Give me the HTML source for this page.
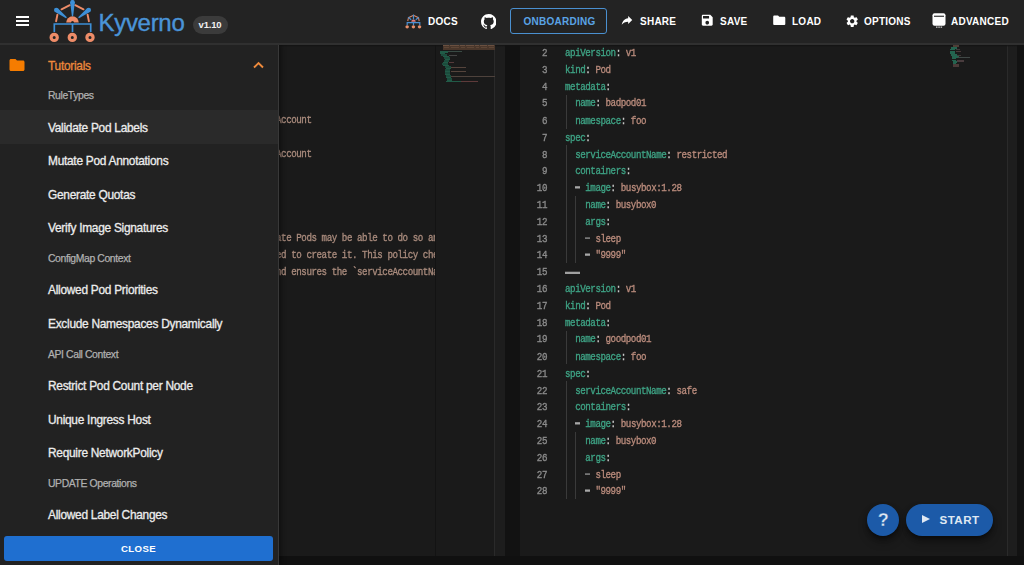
<!DOCTYPE html>
<html><head><meta charset="utf-8">
<style>
*{box-sizing:border-box;margin:0;padding:0}
html,body{width:1024px;height:565px;overflow:hidden;background:#101010;font-family:"Liberation Sans",sans-serif}
.abs{position:absolute}
#hdr{left:0;top:0;width:1024px;height:45px;background:#232323;border-bottom:2px solid #303030}
.nav{color:#fff;font-weight:700;font-size:10px;letter-spacing:0.25px;white-space:nowrap}
#ed1{left:0;top:44px;width:505px;height:512px;background:#1a1a1a}
#ed2{left:520px;top:44px;width:497px;height:512px;background:#1a1a1a}
.mono{font-family:"Liberation Mono",monospace;font-size:9.2px;letter-spacing:-0.45px;white-space:pre;font-weight:400;-webkit-text-stroke:0.3px currentColor;transform:scaleY(1.14);transform-origin:0 0}
.ln{color:#8c8c8c;text-align:right;width:20px}
.k{color:#3ea284}
.s{color:#b98b7c}
.p{color:#c8c8c8}
#drawer{left:0;top:45px;width:279px;height:520px;background:#222222;border-right:1px solid #383838;box-shadow:2px 0 5px rgba(0,0,0,0.45);clip-path:inset(0px -12px 0px 0px)}
.it{left:48px;color:#ececec;font-size:11.9px;letter-spacing:-0.27px;white-space:nowrap;-webkit-text-stroke:0.3px currentColor}
.sub{left:48px;color:#b0b0b0;font-size:10.4px;letter-spacing:-0.38px;white-space:nowrap;-webkit-text-stroke:0.25px currentColor}
</style></head><body>
<!-- editors -->
<div id="ed1" class="abs"></div>
<div class="abs" style="left:435px;top:44px;width:1px;height:512px;background:#131313"></div>
<div class="abs" style="left:494px;top:44px;width:1px;height:512px;background:#2a2a2a"></div>
<div class="abs" style="left:495px;top:44px;width:10px;height:512px;background:#1d1d1d"></div>
<div class="abs" style="left:505px;top:44px;width:15px;height:512px;background:#121212"></div>
<div id="ed2" class="abs"></div>
<div class="abs" style="left:1007px;top:44px;width:1px;height:512px;background:#2a2a2a"></div>
<div class="abs" style="left:1008px;top:44px;width:9px;height:512px;background:#1d1d1d"></div>
<div class="abs" style="left:1017px;top:44px;width:7px;height:512px;background:#121212"></div>

<div class="abs" style="left:279px;top:45px;width:745px;height:2px;background:linear-gradient(#121212,rgba(26,26,26,0))"></div>
<!-- left editor visible text -->
<div class="abs" style="left:278px;top:44px;width:157px;height:512px;overflow:hidden"><div class="abs mono s" style="left:-2px;top:69.4px;line-height:14.781px;color:#a88a7c">Account

Account




ate Pods may be able to do so and
ed to create it. This policy checks
nd ensures the `serviceAccountName`</div></div>

<!-- left minimap -->
<div class="abs" style="left:0;top:0;width:520px;height:90px;filter:blur(0.3px)">
<div class="abs" style="left:442.6px;top:45px;width:52.2px;height:5px;background:#4a372b"></div>
<div class="abs" style="left:443px;top:45px;width:6px;height:1.2px;background:#6a5040"></div>
<div class="abs" style="left:444px;top:47.2px;width:5px;height:1.1px;background:#5e4636"></div>
<div class="abs" style="left:450px;top:45px;width:9px;height:1.2px;background:#6a5040"></div>
<div class="abs" style="left:451px;top:47.2px;width:8px;height:1.1px;background:#5e4636"></div>
<div class="abs" style="left:460px;top:45px;width:5px;height:1.2px;background:#6a5040"></div>
<div class="abs" style="left:461px;top:47.2px;width:4px;height:1.1px;background:#5e4636"></div>
<div class="abs" style="left:466px;top:45px;width:8px;height:1.2px;background:#6a5040"></div>
<div class="abs" style="left:467px;top:47.2px;width:7px;height:1.1px;background:#5e4636"></div>
<div class="abs" style="left:475px;top:45px;width:4px;height:1.2px;background:#6a5040"></div>
<div class="abs" style="left:476px;top:47.2px;width:3px;height:1.1px;background:#5e4636"></div>
<div class="abs" style="left:480px;top:45px;width:7px;height:1.2px;background:#6a5040"></div>
<div class="abs" style="left:481px;top:47.2px;width:6px;height:1.1px;background:#5e4636"></div>
<div class="abs" style="left:488px;top:45px;width:6px;height:1.2px;background:#6a5040"></div>
<div class="abs" style="left:489px;top:47.2px;width:5px;height:1.1px;background:#5e4636"></div>
<div class="abs" style="left:439.5px;top:51px;width:8px;height:1.5px;background:#215a47"></div>
<div class="abs" style="left:447.5px;top:51.2px;width:14px;height:1.2px;background:#394a44"></div>
<div class="abs" style="left:440px;top:52.5px;width:5px;height:1.5px;background:#215a47"></div>
<div class="abs" style="left:441px;top:54px;width:6px;height:1.5px;background:#1c4c3d"></div>
<div class="abs" style="left:442.5px;top:55.5px;width:6px;height:1.5px;background:#215a47"></div>
<div class="abs" style="left:444px;top:57px;width:6px;height:1.5px;background:#1c4c3d"></div>
<div class="abs" style="left:445px;top:58.5px;width:5px;height:1.5px;background:#215a47"></div>
<div class="abs" style="left:443.5px;top:60px;width:5px;height:1.5px;background:#1c4c3d"></div>
<div class="abs" style="left:442.5px;top:61.5px;width:5px;height:1.5px;background:#215a47"></div>
<div class="abs" style="left:442px;top:63px;width:6px;height:1.5px;background:#1c4c3d"></div>
<div class="abs" style="left:443px;top:64.5px;width:6px;height:1.5px;background:#215a47"></div>
<div class="abs" style="left:445px;top:66px;width:6px;height:1.5px;background:#1c4c3d"></div>
<div class="abs" style="left:446px;top:67.5px;width:5px;height:1.5px;background:#215a47"></div>
<div class="abs" style="left:445px;top:69px;width:5px;height:1.5px;background:#1c4c3d"></div>
<div class="abs" style="left:444.5px;top:70.5px;width:5px;height:1.5px;background:#215a47"></div>
<div class="abs" style="left:444.5px;top:72px;width:5px;height:1.5px;background:#1c4c3d"></div>
<div class="abs" style="left:445px;top:73.5px;width:5px;height:1.5px;background:#215a47"></div>
<div class="abs" style="left:445.5px;top:75px;width:5px;height:1.5px;background:#1c4c3d"></div>
<div class="abs" style="left:446px;top:76.5px;width:5px;height:1.5px;background:#215a47"></div>
<div class="abs" style="left:446.5px;top:78px;width:5px;height:1.5px;background:#1c4c3d"></div>
<div class="abs" style="left:446.5px;top:79.5px;width:5px;height:1.5px;background:#215a47"></div>
<div class="abs" style="left:449px;top:55.2px;width:8px;height:1px;background:#444444"></div>
<div class="abs" style="left:449px;top:62px;width:5px;height:1px;background:#553a3a"></div>
<div class="abs" style="left:451px;top:67px;width:15px;height:1.1px;background:#55443c"></div>
<div class="abs" style="left:451px;top:71.4px;width:15px;height:1.1px;background:#55443c"></div>
<div class="abs" style="left:451px;top:76.3px;width:44px;height:1.1px;background:#4e423c"></div>
<div class="abs" style="left:446px;top:80.8px;width:15px;height:1.3px;background:#215a47"></div>
<div class="abs" style="left:461px;top:80.8px;width:17px;height:1.3px;background:#5e3a3a"></div>
</div>
<!-- right minimap -->
<div class="abs" style="left:0;top:0;width:1024px;height:80px;filter:blur(0.35px)">
<div class="abs" style="left:952.8px;top:44.4px;width:6.6px;height:2.6px;background:#4e3e36"></div>
<div class="abs" style="left:950.5px;top:47px;width:6px;height:1.6px;background:#24634f"></div>
<div class="abs" style="left:949.8px;top:48.8px;width:5px;height:1.6px;background:#24634f"></div>
<div class="abs" style="left:956px;top:49px;width:4px;height:1.2px;background:#3e3a3a"></div>
<div class="abs" style="left:950px;top:50.6px;width:4.6px;height:1.6px;background:#24634f"></div>
<div class="abs" style="left:955.5px;top:51.2px;width:5px;height:1.2px;background:#4a3a3a"></div>
<div class="abs" style="left:950.2px;top:52.4px;width:5px;height:1.6px;background:#24634f"></div>
<div class="abs" style="left:950.8px;top:54.2px;width:6.5px;height:1.6px;background:#24634f"></div>
<div class="abs" style="left:957px;top:54.6px;width:4px;height:1px;background:#403838"></div>
<div class="abs" style="left:951.5px;top:56px;width:7px;height:1.6px;background:#24634f"></div>
<div class="abs" style="left:958px;top:57px;width:12px;height:1.1px;background:#404846"></div>
<div class="abs" style="left:952px;top:57.8px;width:4px;height:1.6px;background:#24634f"></div>
<div class="abs" style="left:952.3px;top:59.6px;width:4px;height:1.6px;background:#24634f"></div>
<div class="abs" style="left:957px;top:59.8px;width:7px;height:2px;background:#4a3c3e"></div>
<div class="abs" style="left:952.5px;top:61.4px;width:4px;height:1.6px;background:#24634f"></div>
<div class="abs" style="left:952.8px;top:63.2px;width:3.5px;height:1.4px;background:#24634f"></div>
<div class="abs" style="left:953px;top:64.4px;width:6px;height:2.6px;background:#4a3a38"></div>
</div>
<!-- right editor -->
<div class="abs" style="left:565.5px;top:94.85px;width:1px;height:33.70px;background:#3a3a3a"></div>
<div class="abs" style="left:565.5px;top:145.40px;width:1px;height:117.95px;background:#3a3a3a"></div>
<div class="abs" style="left:565.5px;top:330.75px;width:1px;height:33.70px;background:#3a3a3a"></div>
<div class="abs" style="left:565.5px;top:381.30px;width:1px;height:117.95px;background:#3a3a3a"></div>
<div class="abs" style="left:575.2px;top:195.95px;width:1px;height:67.40px;background:#3a3a3a"></div>
<div class="abs" style="left:575.2px;top:431.85px;width:1px;height:67.40px;background:#3a3a3a"></div>
<div class="abs mono ln" style="left:527px;top:46px;line-height:14.781px">2
3
4
5
6
7
8
9
10
11
12
13
14
15
16
17
18
19
20
21
22
23
24
25
26
27
28</div>
<div class="abs mono" style="left:565px;top:46px;line-height:14.781px"><span class="k">apiVersion</span><span class="p">: </span><span class="s">v1</span>
<span class="k">kind</span><span class="p">: </span><span class="s">Pod</span>
<span class="k">metadata</span><span class="p">:</span>
<span class="p">  </span><span class="k">name</span><span class="p">: </span><span class="s">badpod01</span>
<span class="p">  </span><span class="k">namespace</span><span class="p">: </span><span class="s">foo</span>
<span class="k">spec</span><span class="p">:</span>
<span class="p">  </span><span class="k">serviceAccountName</span><span class="p">: </span><span class="s">restricted</span>
<span class="p">  </span><span class="k">containers</span><span class="p">:</span>
<span class="p">  </span><span style="display:inline-block;width:5.07px;height:1.45px;background:#a8a8a8;vertical-align:2.6px"></span><span class="p"> </span><span class="k">image</span><span class="p">: </span><span class="s">busybox:1.28</span>
<span class="p">    </span><span class="k">name</span><span class="p">: </span><span class="s">busybox0</span>
<span class="p">    </span><span class="k">args</span><span class="p">:</span>
<span class="p">    </span><span style="display:inline-block;width:5.07px;height:1.45px;background:#a8a8a8;vertical-align:2.6px"></span><span class="p"> </span><span class="s">sleep</span>
<span class="p">    </span><span style="display:inline-block;width:5.07px;height:1.45px;background:#a8a8a8;vertical-align:2.6px"></span><span class="p"> </span><span class="s">&quot;9999&quot;</span>
<span style="display:inline-block;width:15px;height:2px;background:#a0a0a0;vertical-align:1.1px"></span>
<span class="k">apiVersion</span><span class="p">: </span><span class="s">v1</span>
<span class="k">kind</span><span class="p">: </span><span class="s">Pod</span>
<span class="k">metadata</span><span class="p">:</span>
<span class="p">  </span><span class="k">name</span><span class="p">: </span><span class="s">goodpod01</span>
<span class="p">  </span><span class="k">namespace</span><span class="p">: </span><span class="s">foo</span>
<span class="k">spec</span><span class="p">:</span>
<span class="p">  </span><span class="k">serviceAccountName</span><span class="p">: </span><span class="s">safe</span>
<span class="p">  </span><span class="k">containers</span><span class="p">:</span>
<span class="p">  </span><span style="display:inline-block;width:5.07px;height:1.45px;background:#a8a8a8;vertical-align:2.6px"></span><span class="p"> </span><span class="k">image</span><span class="p">: </span><span class="s">busybox:1.28</span>
<span class="p">    </span><span class="k">name</span><span class="p">: </span><span class="s">busybox0</span>
<span class="p">    </span><span class="k">args</span><span class="p">:</span>
<span class="p">    </span><span style="display:inline-block;width:5.07px;height:1.45px;background:#a8a8a8;vertical-align:2.6px"></span><span class="p"> </span><span class="s">sleep</span>
<span class="p">    </span><span style="display:inline-block;width:5.07px;height:1.45px;background:#a8a8a8;vertical-align:2.6px"></span><span class="p"> </span><span class="s">&quot;9999&quot;</span></div>

<!-- header -->
<div id="hdr" class="abs"></div>
<div class="abs" style="left:15.5px;top:16.3px;width:13.5px;height:2.2px;background:#fff"></div>
<div class="abs" style="left:15.5px;top:19.9px;width:13.5px;height:2.2px;background:#fff"></div>
<div class="abs" style="left:15.5px;top:23.5px;width:13.5px;height:2.2px;background:#fff"></div>
<svg class="abs" style="left:48px;top:0" width="52" height="44" viewBox="48 0 52 44">
<g stroke="#ee8c68" stroke-width="1.9" stroke-linecap="round" fill="none">
<line x1="61.5" y1="9.3" x2="69.8" y2="5.2"/><line x1="75.2" y1="5.2" x2="83.5" y2="9.3"/>
<line x1="57.4" y1="14.8" x2="56.1" y2="21.3"/><line x1="87.6" y1="14.8" x2="88.9" y2="21.3"/>
</g>
<path d="M66.2 22.6 A6.3 6.3 0 0 1 78.8 22.6 Z" fill="#ee8c68"/>
<circle cx="72.5" cy="22.6" r="1.5" fill="#232323"/>
<g fill="#3d8fd6">
<circle cx="72.5" cy="2.2" r="2.3"/><path d="M70.2 2.5 L74.8 2.5 L73.1 16.3 L71.9 16.3 Z"/>
<circle cx="56.3" cy="10" r="2.3"/><path d="M54.8 11.7 L57.9 8.3 L66.9 17.3 L66 18.2 Z"/>
<circle cx="88.7" cy="10" r="2.3"/><path d="M90.2 11.7 L87.1 8.3 L78.1 17.3 L79 18.2 Z"/>
</g>
<g stroke="#3d8fd6" stroke-width="1.7" fill="none">
<polyline points="54.3,32 54.3,24 90.7,24 90.7,32"/><line x1="72.5" y1="24" x2="72.5" y2="32"/>
</g>
<g stroke="#ee8c68" stroke-width="3.2" fill="none">
<circle cx="54.2" cy="37.4" r="3.1"/><circle cx="72.3" cy="37.4" r="3.1"/><circle cx="90" cy="37.4" r="3.1"/>
</g>
</svg>
<div class="abs" style="left:98.5px;top:9.3px;font-size:24px;color:#4a94d8;letter-spacing:-0.3px;white-space:nowrap;-webkit-text-stroke:0.4px #4a94d8">Kyverno</div>
<div class="abs" style="left:192.5px;top:16px;width:35px;height:18px;border-radius:9px;background:#3b3b3b;color:#f0f0f0;font-size:9.5px;font-weight:700;text-align:center;line-height:18px;letter-spacing:-0.2px">v1.10</div>
<svg class="abs" style="left:404.5px;top:13px" width="18" height="17" viewBox="48 0 52 44">
<g stroke="#e08a6a" stroke-width="3" fill="none"><path d="M56 21 L58 11 L72.5 4 L87 11 L89 21"/></g>
<g stroke="#4a8fd0" stroke-width="3.5" fill="none"><line x1="72.5" y1="2" x2="72.5" y2="16"/><line x1="57" y1="10" x2="66" y2="17"/><line x1="88" y1="10" x2="79" y2="17"/><polyline points="54.3,33 54.3,25 90.7,25 90.7,33"/><line x1="72.5" y1="25" x2="72.5" y2="33"/></g>
<path d="M66 23 A6.5 6.5 0 0 1 79 23 Z" fill="#e07a7a"/>
<g fill="#e8906c"><circle cx="54.2" cy="37.5" r="5"/><circle cx="72.3" cy="37.5" r="5"/><circle cx="90" cy="37.5" r="5"/></g>
</svg>
<div class="abs nav" style="left:428px;top:16px">DOCS</div>
<svg class="abs" style="left:480.5px;top:13.8px" width="15.5" height="15.5" viewBox="0 0 16 16"><path fill="#fff" d="M8 0C3.58 0 0 3.58 0 8c0 3.54 2.29 6.53 5.47 7.59.4.07.55-.17.55-.38 0-.19-.01-.82-.01-1.49-2.01.37-2.53-.49-2.69-.94-.09-.23-.48-.94-.82-1.13-.28-.15-.68-.52-.01-.53.63-.01 1.08.58 1.23.82.72 1.21 1.87.87 2.33.66.07-.52.28-.87.51-1.07-1.78-.2-3.64-.89-3.64-3.95 0-.87.31-1.59.82-2.15-.08-.2-.36-1.02.08-2.12 0 0 .67-.21 2.2.82.64-.18 1.32-.27 2-.27.68 0 1.36.09 2 .27 1.53-1.04 2.2-.82 2.2-.82.44 1.1.16 1.92.08 2.12.51.56.82 1.27.82 2.15 0 3.07-1.87 3.75-3.65 3.95.29.25.54.73.54 1.48 0 1.07-.01 1.93-.01 2.2 0 .21.15.46.55.38A8.013 8.013 0 0016 8c0-4.42-3.58-8-8-8z"/></svg>
<div class="abs" style="left:510px;top:8px;width:97px;height:26px;border:1.5px solid #4a90d0;border-radius:3px"></div>
<div class="abs nav" style="left:523.5px;top:16px;color:#5aa3e6">ONBOARDING</div>
<svg class="abs" style="left:620px;top:13px" width="14" height="14" viewBox="0 0 24 24"><path fill="#fff" d="M14 9V5l7 7-7 7v-4.1c-5 0-8.5 1.6-11 5.1 1-5 4-10 11-11z"/></svg>
<div class="abs nav" style="left:640px;top:16px">SHARE</div>
<svg class="abs" style="left:699.8px;top:13.2px" width="14.5" height="14.5" viewBox="0 0 24 24"><path fill="#fff" d="M17 3H5c-1.11 0-2 .9-2 2v14c0 1.1.89 2 2 2h14c1.1 0 2-.9 2-2V7l-4-4zm-5 16c-1.66 0-3-1.34-3-3s1.34-3 3-3 3 1.34 3 3-1.34 3-3 3zm3-10H5V5h10v4z"/></svg>
<div class="abs nav" style="left:720px;top:16px">SAVE</div>
<svg class="abs" style="left:772.3px;top:13px" width="14.5" height="14.5" viewBox="0 0 24 24"><path fill="#fff" d="M10 4H4c-1.1 0-1.99.9-1.99 2L2 18c0 1.1.9 2 2 2h16c1.1 0 2-.9 2-2V8c0-1.1-.9-2-2-2h-8l-2-2z"/></svg>
<div class="abs nav" style="left:792px;top:16px">LOAD</div>
<svg class="abs" style="left:845px;top:14px" width="14.4" height="14.4" viewBox="0 0 24 24"><path fill="#fff" d="M19.14 12.94c.04-.3.06-.61.06-.94 0-.32-.02-.64-.07-.94l2.03-1.58c.18-.14.23-.41.12-.61l-1.92-3.32c-.12-.22-.37-.29-.59-.22l-2.39.96c-.5-.38-1.03-.7-1.62-.94l-.36-2.54c-.04-.24-.24-.41-.48-.41h-3.84c-.24 0-.43.17-.47.41l-.36 2.54c-.59.24-1.13.57-1.62.94l-2.39-.96c-.22-.08-.47 0-.59.22L2.74 8.87c-.12.21-.08.47.12.61l2.03 1.58c-.05.3-.09.63-.09.94s.02.64.07.94l-2.03 1.58c-.18.14-.23.41-.12.61l1.92 3.32c.12.22.37.29.59.22l2.39-.96c.5.38 1.03.7 1.62.94l.36 2.54c.05.24.24.41.48.41h3.84c.24 0 .44-.17.47-.41l.36-2.54c.59-.24 1.13-.56 1.62-.94l2.39.96c.22.08.47 0 .59-.22l1.92-3.32c.12-.22.07-.47-.12-.61l-2.01-1.58zM12 15.6c-1.98 0-3.6-1.62-3.6-3.6s1.62-3.6 3.6-3.6 3.6 1.62 3.6 3.6-1.62 3.6-3.6 3.6z"/></svg>
<div class="abs nav" style="left:864px;top:16px">OPTIONS</div>
<svg class="abs" style="left:931px;top:12px" width="16" height="17" viewBox="0 0 16 17"><rect x="1.5" y="1.3" width="13" height="12.5" rx="2" fill="#fff"/><rect x="3" y="3.7" width="10" height="1.1" fill="#232323"/><rect x="5" y="14.5" width="1.5" height="1.3" fill="#ccc"/><rect x="7.3" y="14.5" width="1.5" height="1.3" fill="#ccc"/><rect x="9.6" y="14.5" width="1.5" height="1.3" fill="#ccc"/></svg>
<div class="abs nav" style="left:951px;top:16px">ADVANCED</div>

<!-- drawer -->
<div id="drawer" class="abs"></div>
<div class="abs" style="left:0;top:110px;width:278px;height:34px;background:#2a2a2a"></div>
<svg class="abs" style="left:8px;top:55.5px" width="18" height="18" viewBox="0 0 24 24"><path fill="#f57c00" d="M10 4H4c-1.1 0-1.99.9-1.99 2L2 18c0 1.1.9 2 2 2h16c1.1 0 2-.9 2-2V8c0-1.1-.9-2-2-2h-8l-2-2z"/></svg>
<div class="abs it" style="left:48px;top:59px;color:#ee8a3c">Tutorials</div>
<svg class="abs" style="left:252px;top:60px" width="13" height="10" viewBox="0 0 13 10"><polyline points="2,7.5 6.5,3 11,7.5" fill="none" stroke="#ee8a3c" stroke-width="1.9"/></svg>
<div class="abs sub" style="top:90.1px">RuleTypes</div>
<div class="abs it" style="top:120.5px">Validate Pod Labels</div>
<div class="abs it" style="top:154.1px">Mutate Pod Annotations</div>
<div class="abs it" style="top:187.7px">Generate Quotas</div>
<div class="abs it" style="top:221.3px">Verify Image Signatures</div>
<div class="abs sub" style="top:253.3px">ConfigMap Context</div>
<div class="abs it" style="top:283.3px">Allowed Pod Priorities</div>
<div class="abs it" style="top:316.9px">Exclude Namespaces Dynamically</div>
<div class="abs sub" style="top:348.9px">API Call Context</div>
<div class="abs it" style="top:378.9px">Restrict Pod Count per Node</div>
<div class="abs it" style="top:412.5px">Unique Ingress Host</div>
<div class="abs it" style="top:446.1px">Require NetworkPolicy</div>
<div class="abs sub" style="top:478.1px">UPDATE Operations</div>
<div class="abs it" style="top:508.1px">Allowed Label Changes</div>
<div class="abs" style="left:4px;top:536px;width:269px;height:25px;background:#1f6fd0;border-radius:3px;color:#fff;font-weight:700;font-size:9.6px;letter-spacing:0.35px;text-align:center;line-height:25px">CLOSE</div>

<!-- FABs -->
<div class="abs" style="left:867px;top:504px;width:32px;height:32px;border-radius:50%;background:#1c5aa8;box-shadow:0 3px 5px -1px rgba(0,0,0,0.5),0 6px 10px 0 rgba(0,0,0,0.3);color:#dfe8f3;font-weight:700;font-size:18px;text-align:center;line-height:32px;letter-spacing:-0.5px;-webkit-text-stroke:0.3px #1c5aa8">?</div>
<div class="abs" style="left:906px;top:504px;width:87px;height:32px;border-radius:16px;background:#1c5aa8;box-shadow:0 3px 5px -1px rgba(0,0,0,0.5),0 6px 10px 0 rgba(0,0,0,0.3);color:#dfe8f3;font-weight:700;font-size:11.6px;letter-spacing:0.45px;line-height:32px;padding-left:33.5px">START</div>
<div class="abs" style="left:922px;top:515px;width:0;height:0;border-left:8px solid #dfe8f3;border-top:4.5px solid transparent;border-bottom:4.5px solid transparent"></div>

<script>
</script>
</body></html>
